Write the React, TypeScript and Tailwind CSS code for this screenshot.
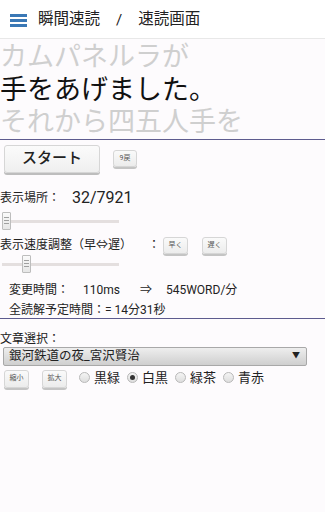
import React from "react";

const font = { fontFamily: 'Roboto, "Noto Sans CJK JP", "Noto Sans", sans-serif' };

function SmallBtn({ label, className = "" }: { label: string; className?: string }) {
  return (
    <div
      className={
        "flex items-center justify-center rounded-[3px] border border-[#d6d6d6] bg-gradient-to-b from-[#fafafa] to-[#ececec] shadow-[0_2px_0_#c4c4c4] text-[7px] text-[#555] " +
        className
      }
    >
      {label}
    </div>
  );
}

function Slider({ pos }: { pos: number }) {
  return (
    <div className="relative h-[20px] w-[117px] ml-[2px]">
      <div className="absolute left-0 right-0 top-[8px] h-[3px] bg-[#e4dfdf]" />
      <div
        className="absolute top-0 h-[18px] w-[9px] rounded-[1px] border border-[#bdbdbd] bg-gradient-to-b from-[#fafafa] to-[#e6e6e6] flex flex-col items-center justify-center gap-[2px]"
        style={{ left: pos }}
      >
        <div className="h-px w-[5px] bg-[#a0a0a0]" />
        <div className="h-px w-[5px] bg-[#a0a0a0]" />
        <div className="h-px w-[5px] bg-[#a0a0a0]" />
      </div>
    </div>
  );
}

function Radio({ label, checked }: { label: string; checked?: boolean }) {
  return (
    <div className="flex items-center gap-[4px]">
      <div className="flex h-[11px] w-[11px] items-center justify-center rounded-full border border-[#b8b8b8] bg-gradient-to-b from-[#f4f4f4] to-[#dedede]">
        {checked && <div className="h-[5px] w-[5px] rounded-full bg-[#333]" />}
      </div>
      <span className="text-[13px] text-[#222]">{label}</span>
    </div>
  );
}

export default function App() {
  return (
    <div className="h-[512px] w-[325px] overflow-hidden bg-[#fdfbfd] text-[#222]" style={font}>
      {/* header */}
      <div className="flex h-[39px] items-center border-b border-[#e8e8e8] bg-white pl-[10px] pt-[2px]">
        <div className="flex flex-col gap-[2px]">
          <div className="h-[3px] w-[17px] bg-[#3a78b5]" />
          <div className="h-[3px] w-[17px] bg-[#3a78b5]" />
          <div className="h-[3px] w-[17px] bg-[#3a78b5]" />
        </div>
        <span className="ml-[11px] text-[15.5px] text-[#222]">瞬間速読</span>
        <span className="ml-[16px] text-[15px] text-[#222]">/</span>
        <span className="ml-[16px] text-[15.5px] text-[#222]">速読画面</span>
      </div>

      {/* reading area */}
      <div className="border-b border-[#5d5b8e] pt-[2px] text-[27px] leading-[32.5px]">
        <div className="text-[#cfcfcf]">カムパネルラが</div>
        <div className="text-[#111]">手をあげました。</div>
        <div className="text-[#cfcfcf]">それから四五人手を</div>
      </div>

      {/* controls */}
      <div className="flex items-center pt-[5px]">
        <div className="ml-[4px] flex h-[28px] w-[96px] items-center justify-center rounded-[3px] border border-[#d6d6d6] bg-gradient-to-b from-[#fbfbfb] to-[#efefef] shadow-[0_2px_0_#bdbdbd] text-[15px] font-medium text-[#222]">
          スタート
        </div>
        <SmallBtn label="9戻" className="ml-[13px] h-[17px] w-[24px]" />
      </div>

      <div className="mt-[13px] flex h-[24px] items-center">
        <span className="text-[12px]">表示場所：</span>
        <span className="ml-[12px] text-[16px]">32/7921</span>
      </div>
      <div className="mt-[2px]">
        <Slider pos={0} />
      </div>

      <div className="mt-[5px] flex h-[17px] items-center">
        <span className="text-[12px]">表示速度調整（早⇔遅）</span>
        <span className="ml-[16px] text-[12px]">：</span>
        <SmallBtn label="早く" className="ml-[3px] h-[17px] w-[25px]" />
        <SmallBtn label="遅く" className="ml-[14px] h-[17px] w-[25px]" />
      </div>
      <div className="mt-[1px]">
        <Slider pos={20} />
      </div>

      <div className="mt-[7px] flex h-[16px] items-center pl-[9px] text-[12px]">
        <span>変更時間：</span>
        <span className="ml-[14px]">110ms</span>
        <span className="ml-[20px]">⇒</span>
        <span className="ml-[14px]">545WORD/分</span>
      </div>
      <div className="mt-[4px] h-[16px] pl-[9px] text-[12px] leading-[16px]">全読解予定時間：= 14分31秒</div>

      <div className="border-b border-[#5d5b8e]" />

      <div className="mt-[12px] h-[16px] text-[12px] leading-[16px]">文章選択：</div>
      <div className="ml-[3px] flex h-[19px] w-[304px] items-center justify-between rounded-[2px] border border-[#a8a8a8] bg-gradient-to-b from-[#eeeeee] to-[#cfcfcf] pl-[5px] pr-[6px]">
        <span className="text-[12.5px] text-[#222]">銀河鉄道の夜_宮沢賢治</span>
        <span className="text-[8px] text-[#222]">▼</span>
      </div>

      <div className="mt-[4px] flex items-center">
        <SmallBtn label="縮小" className="ml-[4px] h-[18px] w-[25px]" />
        <SmallBtn label="拡大" className="ml-[13px] h-[18px] w-[25px]" />
        <div className="ml-[12px] -mt-[2px] flex items-center gap-[7px]">
          <Radio label="黒緑" />
          <Radio label="白黒" checked />
          <Radio label="緑茶" />
          <Radio label="青赤" />
        </div>
      </div>
    </div>
  );
}
